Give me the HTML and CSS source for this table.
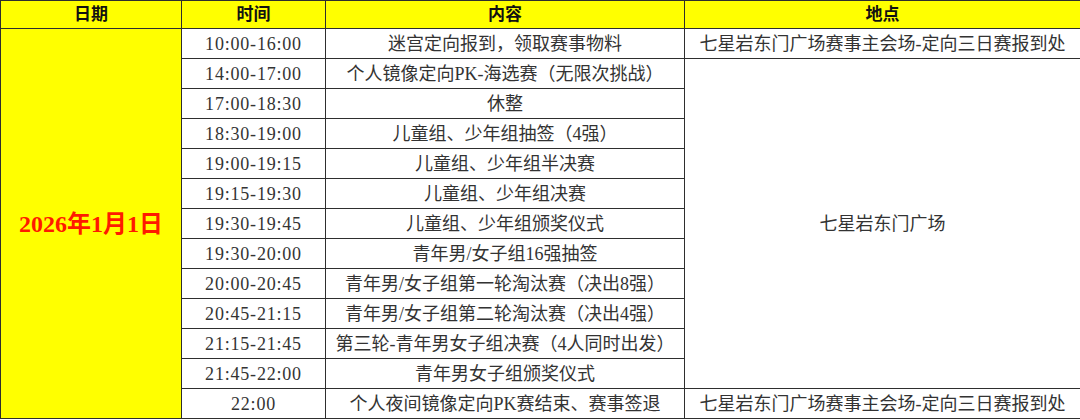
FILE: index.html
```html
<!DOCTYPE html>
<html lang="zh-CN">
<head>
<meta charset="utf-8">
<title>赛程</title>
<link rel="stylesheet" href="styles.css">
</head>
<body>
<table class="schedule">
  <colgroup>
    <col class="c-date">
    <col class="c-time">
    <col class="c-content">
    <col class="c-place">
  </colgroup>
  <thead>
    <tr class="head">
      <th>日期</th><th>时间</th><th>内容</th><th>地点</th>
    </tr>
  </thead>
  <tbody>
    <tr>
      <td class="date" rowspan="13">2026年1月1日</td>
      <td class="time">10:00-16:00</td>
      <td>迷宫定向报到，领取赛事物料</td>
      <td>七星岩东门广场赛事主会场-定向三日赛报到处</td>
    </tr>
    <tr>
      <td class="time">14:00-17:00</td>
      <td>个人镜像定向PK-海选赛（无限次挑战）</td>
      <td rowspan="11">七星岩东门广场</td>
    </tr>
    <tr><td class="time">17:00-18:30</td><td>休整</td></tr>
    <tr><td class="time">18:30-19:00</td><td>儿童组、少年组抽签（4强）</td></tr>
    <tr><td class="time">19:00-19:15</td><td>儿童组、少年组半决赛</td></tr>
    <tr><td class="time">19:15-19:30</td><td>儿童组、少年组决赛</td></tr>
    <tr><td class="time">19:30-19:45</td><td>儿童组、少年组颁奖仪式</td></tr>
    <tr><td class="time">19:30-20:00</td><td>青年男/女子组16强抽签</td></tr>
    <tr><td class="time">20:00-20:45</td><td>青年男/女子组第一轮淘汰赛（决出8强）</td></tr>
    <tr><td class="time">20:45-21:15</td><td>青年男/女子组第二轮淘汰赛（决出4强）</td></tr>
    <tr><td class="time">21:15-21:45</td><td>第三轮-青年男女子组决赛（4人同时出发）</td></tr>
    <tr><td class="time">21:45-22:00</td><td>青年男女子组颁奖仪式</td></tr>
    <tr>
      <td class="time">22:00</td>
      <td>个人夜间镜像定向PK赛结束、赛事签退</td>
      <td>七星岩东门广场赛事主会场-定向三日赛报到处</td>
    </tr>
  </tbody>
</table>
</body>
</html>
```

FILE: styles.css
```css
html, body {
  margin: 0;
  padding: 0;
  background: #ffffff;
}

.schedule {
  width: 1080px;
  table-layout: fixed;
  border-collapse: collapse;
  font-family: "Liberation Serif", "Noto Sans CJK SC", serif;
  font-size: 18px;
  color: #333333;
}

.c-date { width: 181px; }
.c-time { width: 144px; }
.c-content { width: 359px; }
.c-place { width: 396px; }

.schedule th,
.schedule td {
  border: 1px solid #2e2e2e;
  text-align: center;
  vertical-align: middle;
  padding: 0;
  height: 29px;
  line-height: 20px;
  white-space: nowrap;
  overflow: hidden;
}

.head th {
  background: #ffff00;
  color: #111111;
  font-weight: 700;
  font-size: 17px;
  height: 27px;
}

.schedule td.time {
  letter-spacing: 0.8px;
}

.schedule td.date {
  background: #ffff00;
  color: #ff1a00;
  font-weight: 700;
  font-size: 24px;
  line-height: 28px;
}
```
